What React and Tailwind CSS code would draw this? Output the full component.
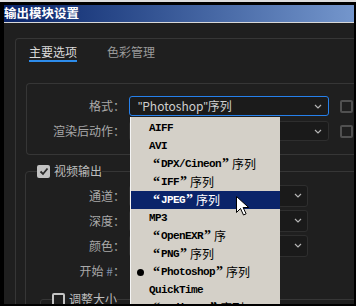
const ui = "font-['Noto_Sans_CJK_SC','Liberation_Sans',sans-serif]";

function Chevron() {
  return (
    <svg width="8" height="5" viewBox="0 0 8 5" className="shrink-0">
      <path d="M1 1l3 3 3-3" fill="none" stroke="#b4b4b4" strokeWidth="1.2" />
    </svg>
  );
}

const formats = [
  { t: "AIFF" },
  { t: "AVI" },
  { q: "DPX/Cineon", s: "序列" },
  { q: "IFF", s: "序列" },
  { q: "JPEG", s: "序列", sel: true },
  { t: "MP3" },
  { q: "OpenEXR", s: "序" },
  { q: "PNG", s: "序列" },
  { q: "Photoshop", s: "序列", dot: true },
  { t: "QuickTime" },
  { q: "Radiance", s: "序列" },
];

function FormatRow({ item }) {
  const mono = "font-['Liberation_Mono',monospace] text-[11px] font-bold tracking-[-0.6px]";
  const quote = "inline-block font-['Liberation_Serif',serif] text-[14px] font-bold leading-none";
  return (
    <div
      className={
        item.sel
          ? "flex h-[18px] items-center bg-[#0a246a] text-white"
          : "flex h-[18px] items-center text-black"
      }
    >
      <span className="flex w-[18px] shrink-0 pl-[6px]">
        {item.dot && <span className="h-[7px] w-[7px] rounded-full bg-black" />}
      </span>
      {item.t ? (
        <span className={mono}>{item.t}</span>
      ) : (
        <>
          <span className={quote + " w-[12px] pr-[1px] text-right"}>“</span>
          <span className={mono}>{item.q}</span>
          <span className={quote + " w-[11px] pl-[1px] text-left"}>”</span>
          <span className={ui + " text-[12px] leading-none"}>{item.s}</span>
        </>
      )}
    </div>
  );
}

function Row({ label, children }) {
  return (
    <div className="flex h-[25px] items-center">
      <div className="w-[99px] text-right text-[12px] text-[#a9a9a9]">{label}</div>
      <div className="ml-[4px]">{children}</div>
    </div>
  );
}

function DarkSelect() {
  return (
    <div className="flex h-[22px] w-[179px] items-center justify-end rounded-[3px] border border-[#2e2e2e] bg-[#1a1a1a] pr-[5px]">
      <Chevron />
    </div>
  );
}

export default function App() {
  return (
    <div className={"h-[306px] w-[356px] overflow-hidden border-t-2 border-[#dcdcdc] bg-black pb-[2px] pl-[4px] pr-[2px] pt-[3px] " + ui}>
      <div className="flex h-[17px] items-center bg-gradient-to-r from-[#0a246a] to-[#7496cc]">
        <span className="text-[12.5px] font-bold leading-none text-white">输出模块设置</span>
      </div>
      <div className="h-[1px] bg-[#d8d8d8]" />

      <div className="relative h-[281px] overflow-hidden bg-[#1f1f1f]">
        {/* main panel */}
        <div className="ml-[11px] mt-[15px] h-[300px] w-[360px] rounded-tl-[4px] border-l border-t border-[#363636]">
          <div className="flex gap-[30px] pl-[13px] pt-[5px]">
            <div className="flex flex-col">
              <span className="text-[12px] leading-[16px] text-[#dadada]">主要选项</span>
              <span className="h-[2px] bg-[#2d8ceb]" />
            </div>
            <span className="text-[12px] leading-[16px] text-[#9a9a9a]">色彩管理</span>
          </div>

          <div className="ml-[10px] mt-[21px] w-[360px] rounded-l-[4px] border-y border-l border-[#363636] pb-[13px] pt-[12px]">
            <div className="flex items-center">
              <div className="w-[98px] text-right text-[12px] text-[#a9a9a9]">格式：</div>
              <div className="ml-[4px] flex h-[20px] w-[200px] items-center justify-between rounded-[3px] border border-[#2680eb] bg-[#1b1b1b] pl-[8px] pr-[6px]">
                <span className="text-[12px] leading-none text-[#cfcfcf]">
                  <span className="font-['Liberation_Sans',sans-serif]">"</span>Photoshop
                  <span className="font-['Liberation_Sans',sans-serif]">"</span>序列
                </span>
                <Chevron />
              </div>
              <div className="ml-[11px] h-[13px] w-[13px] rounded-[2px] border-2 border-[#505050]" />
            </div>
            <div className="mt-[5px] flex items-center">
              <div className="w-[98px] text-right text-[12px] text-[#a9a9a9]">渲染后动作：</div>
              <div className="ml-[4px] flex h-[20px] w-[200px] items-center justify-end rounded-[3px] border border-[#2e2e2e] bg-[#1a1a1a] pr-[6px]">
                <Chevron />
              </div>
              <div className="ml-[11px] h-[13px] w-[13px] rounded-[2px] border-2 border-[#505050]" />
            </div>
          </div>

          <fieldset className="ml-[9px] mt-[8px] w-[360px] rounded-l-[4px] border border-[#363636] p-0">
            <legend className="ml-[11px] flex h-[16px] items-center gap-[4px] p-0">
              <span className="flex h-[13px] w-[13px] items-center justify-center rounded-[2px] bg-[#c2c2c2]">
                <svg width="10" height="9" viewBox="0 0 10 9">
                  <path d="M1.5 4.5l2.5 2.5 4.5-5.5" fill="none" stroke="#2a2a2a" strokeWidth="1.8" />
                </svg>
              </span>
              <span className="text-[12px] leading-none text-[#bdbdbd]">视频输出</span>
            </legend>
            <div className="pt-[4px]">
              <Row label="通道：">
                <DarkSelect />
              </Row>
              <Row label="深度：">
                <DarkSelect />
              </Row>
              <Row label="颜色：">
                <DarkSelect />
              </Row>
              <Row
                label={
                  <>
                    开始 <span className="text-[#7f90aa]">#</span>：
                  </>
                }
              />
            </div>
            <fieldset className="ml-[14px] mt-[8px] h-[40px] w-[360px] rounded-[3px] border border-[#363636] p-0">
              <legend className="ml-[11px] flex h-[16px] items-center gap-[4px] p-0">
                <span className="h-[13px] w-[13px] rounded-[2px] border-2 border-[#c4c4c4]" />
                <span className="text-[12px] leading-none text-[#bdbdbd]">调整大小</span>
              </legend>
            </fieldset>
          </fieldset>
        </div>

        {/* open format list */}
        <div className="absolute left-[126px] top-[94px] h-[200px] w-[150px] border-l border-[#f4f4f4] bg-[#d4d0c8] pt-[2px]">
          {formats.map((f, i) => (
            <FormatRow key={i} item={f} />
          ))}
        </div>

        {/* mouse pointer */}
        <svg className="absolute left-[232px] top-[173px]" width="13" height="20" viewBox="0 0 13 20">
          <path
            d="M0.5 0.5v16l4-4 3 6.5 2.6-1.2-3-6.3h5.6z"
            fill="#fff"
            stroke="#000"
            strokeWidth="1"
            strokeLinejoin="round"
          />
        </svg>
      </div>
    </div>
  );
}
